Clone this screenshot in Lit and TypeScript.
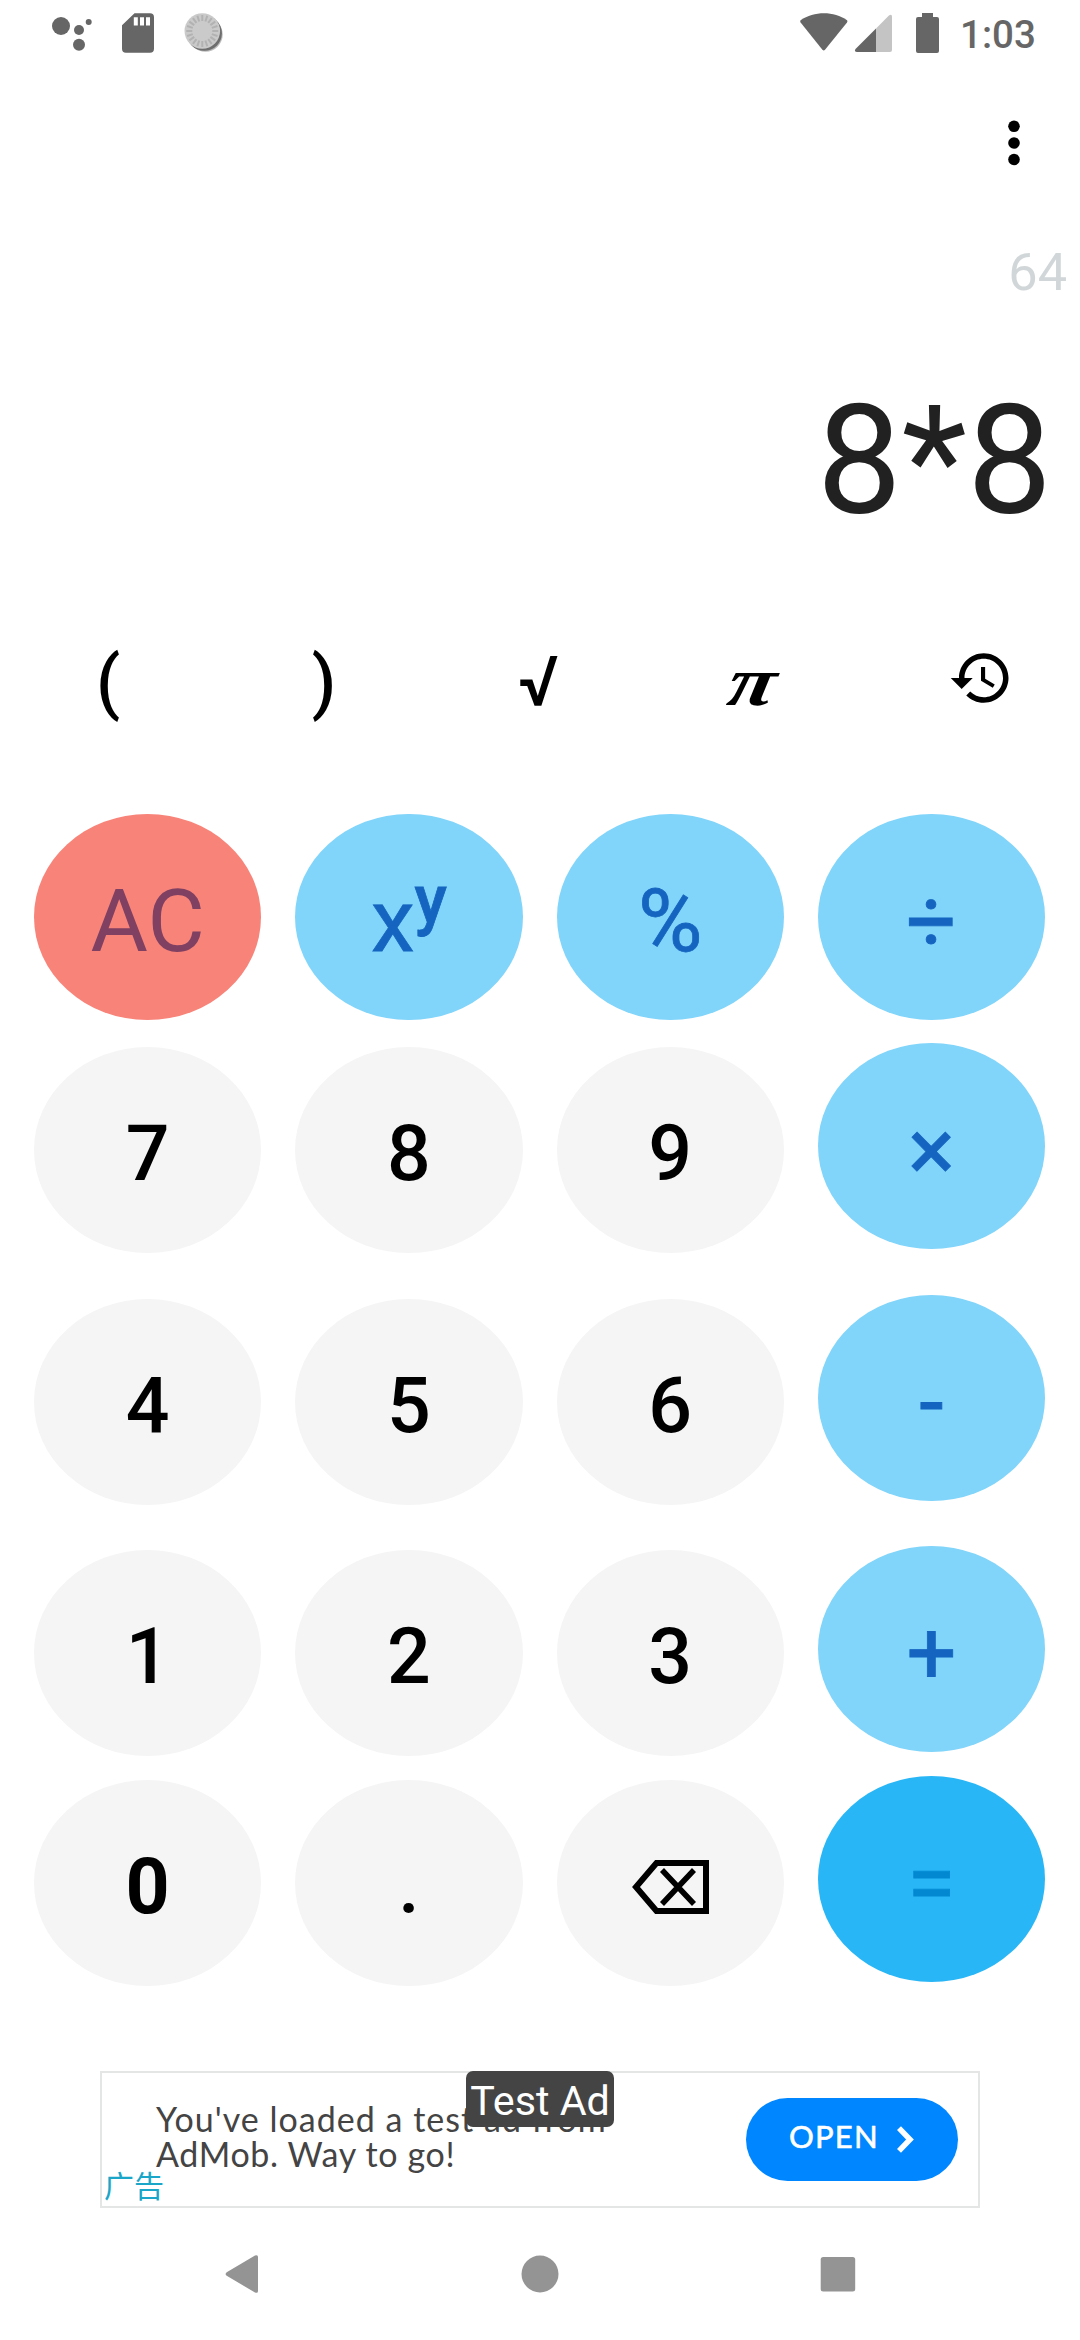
import { LitElement, html, css, svg } from "lit";
import { customElement } from "lit/decorators.js";
import { classMap } from "lit/directives/class-map.js";

type Kind = "clear" | "op" | "digit" | "equals";

interface Key {
  label: string;
  kind: Kind;
  strong?: boolean;
  sup?: string;
}

const KEYS: Key[] = [
  { label: "AC", kind: "clear" },
  { label: "x", sup: "y", kind: "op" },
  { label: "%", kind: "op" },
  { label: "÷", kind: "op" },
  { label: "7", kind: "digit" },
  { label: "8", kind: "digit" },
  { label: "9", kind: "digit" },
  { label: "×", kind: "op" },
  { label: "4", kind: "digit" },
  { label: "5", kind: "digit" },
  { label: "6", kind: "digit" },
  { label: "-", kind: "op" },
  { label: "1", kind: "digit" },
  { label: "2", kind: "digit" },
  { label: "3", kind: "digit" },
  { label: "+", kind: "op" },
  { label: "0", kind: "digit", strong: true },
  { label: ".", kind: "digit" },
  { label: "", kind: "digit" },
  { label: "=", kind: "equals" },
];

@customElement("status-bar")
export class StatusBar extends LitElement {
  static styles = css`
    :host {
      display: flex;
      justify-content: space-between;
      height: 66px;
      color: #666;
      font-family: Roboto, sans-serif;
    }
    .icons {
      display: block;
      width: 240px;
      height: 66px;
    }
    .right {
      display: flex;
    }
    .signals {
      display: block;
      width: 160px;
      height: 66px;
    }
    .time {
      width: 120px;
      font-size: 38.5px;
      line-height: 69px;
      font-weight: 500;
    }
  `;

  render() {
    const ticks = Array.from({ length: 20 }, (_, i) => i * 18);
    return html`
      <svg class="icons" viewBox="0 0 240 66" fill="#666">
        <circle cx="61" cy="26" r="9" />
        <circle cx="79" cy="30" r="5" />
        <circle cx="88.7" cy="22" r="3" />
        <circle cx="79" cy="44.7" r="6" />
        <path
          fill-rule="evenodd"
          d="M134.5 13.3H150a4 4 0 0 1 4 4v31.4a4 4 0 0 1-4 4h-24a4 4 0 0 1-4-4V25.2zM133.8 17.2v8.3h4v-8.3zM140 17.2v8.3h4v-8.3zM146 17.2v8.3h4v-8.3z"
        />
        <circle cx="205.5" cy="34.5" r="17.2" fill="#bbb" />
        <circle cx="204.3" cy="33.2" r="17.6" fill="#6e6e6e" />
        <circle cx="202.3" cy="31" r="17.8" fill="#cacaca" />
        ${ticks.map(
          (a) => svg`<path d="M202.3 15v6" stroke="#b2b2b2" stroke-width="2" transform="rotate(${a} 202.3 31)" />`
        )}
      </svg>
      <div class="right">
        <svg class="signals" viewBox="800 0 160 66" fill="#666">
          <path d="M800.6 20.3C814 11 834 11 847 20.3q.8 1 0 2.2L825 49.7q-1.3 1.6-2.6 0L800.6 22.5q-.8-1.2 0-2.2z" />
          <path fill="#c4c4c4" d="M876 28.5L889.2 15.3q2.8-1.8 2.8 1.5V50q0 2-2 2H876z" />
          <path d="M876 28.5V52H857q-3.200-.3-1.500-3z" />
          <path d="M922 13h11v4h4q2 0 2 2v32q0 2-2 2h-19q-2 0-2-2V19q0-2 2-2h4z" />
        </svg>
        <span class="time">1:03</span>
      </div>
    `;
  }
}

@customElement("ad-banner")
export class AdBanner extends LitElement {
  static styles = css`
    :host {
      display: flex;
      box-sizing: border-box;
      position: relative;
      width: 880px;
      height: 137px;
      border: 2px solid #e4e5e5;
      padding: 25px 20px 0 54px;
      justify-content: space-between;
      align-items: flex-start;
      font-family: Lato, sans-serif;
    }
    .copy {
      margin: 3px 0 0;
      font-size: 34px;
      line-height: 35px;
      color: #444;
      letter-spacing: 1.02px;
      white-space: nowrap;
    }
    .second {
      letter-spacing: 0.65px;
    }
    .open {
      display: flex;
      align-items: center;
      box-sizing: border-box;
      width: 212px;
      height: 83px;
      padding: 0 0 5px 43px;
      border-radius: 41.5px;
      background: #0087ff;
      color: #fff;
      font-size: 31px;
      letter-spacing: 1.2px;
      -webkit-text-stroke: 0.6px #fff;
    }
    .word {
      width: 108px;
      padding-bottom: 2px;
    }
    .chevron {
      display: block;
      width: 17px;
      height: 27px;
      margin-top: 5px;
    }
    .badge {
      position: absolute;
      left: 364px;
      top: -2px;
      width: 148px;
      height: 56px;
      border-radius: 7px;
      background: #444;
      color: #fff;
      font: 41.25px/60px Roboto, sans-serif;
      text-align: center;
    }
    .tag {
      position: absolute;
      left: 2px;
      bottom: 5px;
      color: #1aa6c8;
      font: 30px/34px "Noto Sans CJK SC", sans-serif;
    }
  `;

  render() {
    return html`
      <p class="copy">You've loaded a test ad from<br /><span class="second">AdMob. Way to go!</span></p>
      <div class="open">
        <span class="word">OPEN</span>
        <svg class="chevron" viewBox="0 0 17 27">
          <path d="M2 2.200L13 13.500L2 24.800" fill="none" stroke="#fff" stroke-width="5.500" />
        </svg>
      </div>
      <span class="badge">Test Ad</span>
      <span class="tag">广告</span>
    `;
  }
}

@customElement("app-root")
export class AppRoot extends LitElement {
  static styles = css`
    :host {
      display: flex;
      flex-direction: column;
      width: 1080px;
      height: 2340px;
      background: #fff;
      font-family: Roboto, sans-serif;
      overflow: hidden;
    }
    .toolbar {
      display: flex;
      justify-content: flex-end;
      align-items: center;
      height: 154px;
      padding-right: 60px;
    }
    .dots {
      display: block;
      width: 12px;
      height: 46px;
    }
    .result {
      height: 104px;
      padding-right: 13px;
      text-align: right;
      font-size: 52.25px;
      line-height: 106px;
      color: #d1d7d9;
    }
    .expression {
      height: 273px;
      padding-right: 28px;
      text-align: right;
      font-size: 151.25px;
      line-height: 275px;
      color: #212121;
    }
    .functions {
      display: grid;
      grid-template-columns: repeat(5, 1fr);
      box-sizing: border-box;
      height: 166px;
      padding-top: 3px;
      align-items: center;
      justify-items: center;
      font-size: 70px;
      font-weight: 500;
      color: #000;
    }
    .root {
      margin-right: 3px;
    }
    .pi {
      font-family: "Liberation Serif", serif;
      font-style: italic;
      font-weight: 700;
      transform: scaleX(1.22) skewX(-9deg);
      margin-right: 6px;
    }
    .history {
      display: block;
      width: 66px;
      height: 66px;
      margin: 0 0 7px 17px;
    }
    .keypad {
      display: grid;
      grid-template-columns: repeat(4, 1fr);
      grid-template-rows: 229px 252px 251px 230px 206px;
      column-gap: 34px;
      padding: 51px 35px 0 34px;
      align-items: start;
    }
    .key {
      display: flex;
      align-items: center;
      justify-content: center;
      box-sizing: border-box;
      height: 206px;
      padding-top: 7px;
      border-radius: 50%;
      font-size: 88px;
    }
    .clear {
      background: #f88379;
      color: #7f4062;
    }
    .op {
      background: #81d4fa;
      color: #1565c0;
      -webkit-text-stroke: 0.8px #1565c0;
    }
    .equals {
      background: #29b6f6;
      color: #0288d1;
      -webkit-text-stroke: 0.8px #0288d1;
    }
    .digit {
      margin-top: 4px;
      padding-top: 8px;
      background: #f5f5f5;
      color: #000;
      font-size: 77px;
      font-weight: 500;
    }
    .strong {
      font-weight: 700;
    }
    .sup {
      align-self: flex-start;
      margin-top: 40px;
      font-size: 66px;
      font-weight: 500;
    }
    .erase {
      display: block;
      width: 77px;
      height: 54px;
    }
    .ad {
      margin: 89px 0 0 100px;
    }
    .nav {
      display: grid;
      grid-template-columns: repeat(3, 297.5px);
      justify-content: center;
      justify-items: center;
      align-items: center;
      height: 132px;
    }
    .nav-icon {
      display: block;
      width: 40px;
      height: 40px;
    }
  `;

  private renderKey(key: Key) {
    const classes = { key: true, [key.kind]: true, strong: !!key.strong };
    return html`<div class=${classMap(classes)}>
      ${key.label
        ? html`<span>${key.label}</span>`
        : html`<svg class="erase" viewBox="0 0 77 54" fill="none" stroke="#000">
            <path d="M24.500 3H74V51H24.500L4 27z" stroke-width="6" />
            <path d="M30 10L62 44M62 10L30 44" stroke-width="5.500" />
          </svg>`}${key.sup ? html`<span class="sup">${key.sup}</span>` : null}
    </div>`;
  }

  render() {
    return html`
      <status-bar></status-bar>
      <div class="toolbar">
        <svg class="dots" viewBox="0 0 12 46">
          <circle cx="6" cy="6.300" r="5.800" />
          <circle cx="6" cy="23" r="5.800" />
          <circle cx="6" cy="39.500" r="5.800" />
        </svg>
      </div>
      <div class="result">64</div>
      <div class="expression">8*8</div>
      <div class="functions">
        <span>(</span>
        <span>)</span>
        <span class="root">√</span>
        <span class="pi">π</span>
        <svg class="history" viewBox="0 0 24 24">
          <path
            d="M13 3c-4.970 0-9 4.030-9 9H1l3.890 3.890.07.14L9 12H6c0-3.870 3.130-7 7-7s7 3.130 7 7-3.130 7-7 7c-1.930 0-3.680-.79-4.940-2.060l-1.420 1.420C8.270 19.990 10.510 21 13 21c4.970 0 9-4.030 9-9s-4.030-9-9-9zm-1 5v5l4.280 2.540.72-1.210-3.500-2.080V8H12z"
          />
        </svg>
      </div>
      <div class="keypad">${KEYS.map((k) => this.renderKey(k))}</div>
      <ad-banner class="ad"></ad-banner>
      <div class="nav">
        <svg class="nav-icon" viewBox="0 0 40 40" fill="#949494">
          <path d="M3.700 18.200L32 1.500q3-1.200 3 1.500V37q0 2.700-3 1.500L3.700 21.800q-2.200-1.800 0-3.600z" />
        </svg>
        <svg class="nav-icon" viewBox="0 0 40 40" fill="#949494"><circle cx="20" cy="20" r="18.500" /></svg>
        <svg class="nav-icon" viewBox="0 0 40 40" fill="#949494">
          <rect x="2.700" y="3" width="34.500" height="34.500" rx="2.500" />
        </svg>
      </div>
    `;
  }
}
